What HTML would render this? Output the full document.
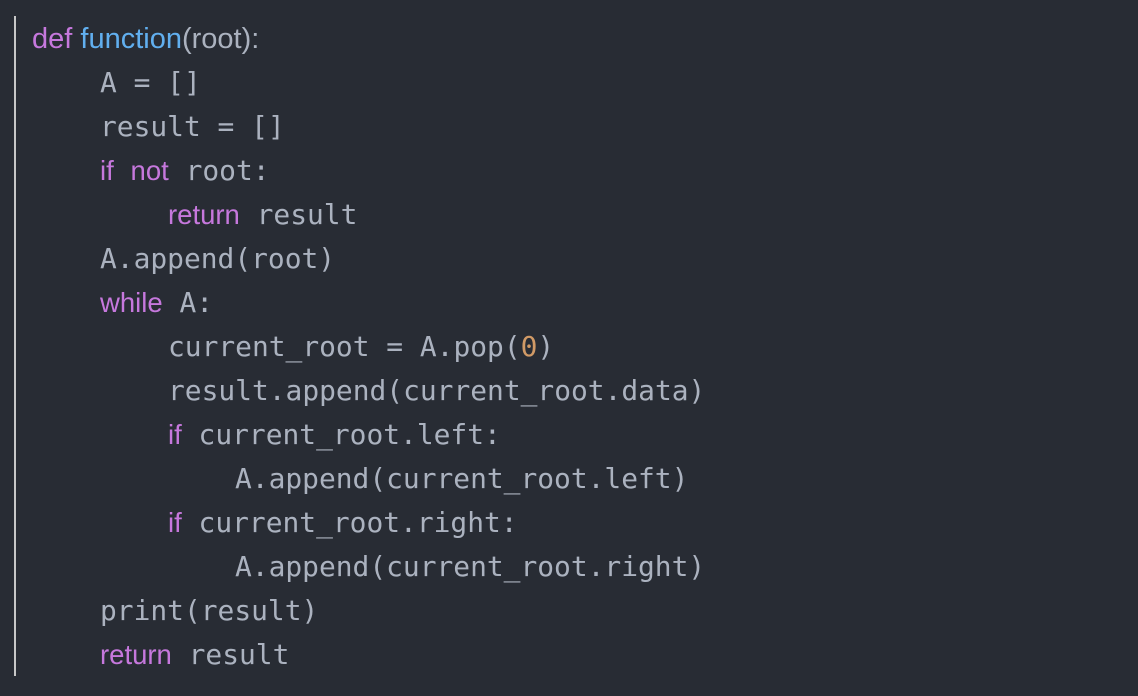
<!DOCTYPE html>
<html><head><meta charset="utf-8"><style>
html,body{margin:0;padding:0}
body{width:1138px;height:696px;background:#282c34;position:relative;overflow:hidden}
.bar{position:absolute;left:14px;top:16px;width:2px;height:660px;background:#c8c8c8}
.l{position:absolute;height:44px;line-height:44px;white-space:pre;color:#abb2bf;font-family:"DejaVu Sans Mono","Liberation Mono",monospace;font-size:27.9px;margin-top:1px}
.s{font-family:"Liberation Sans",sans-serif;font-size:29px}
.k{color:#c678dd;font-family:"Liberation Sans",sans-serif;font-size:27.5px}
.f{color:#61afef}
.n{color:#d19a66}
</style></head><body>
<div class="bar"></div>
<div class="l s" style="left:32px;top:16px"><span style="color:#c678dd">def</span> <span class="f">function</span>(root):</div>
<div class="l" style="left:100px;top:60px">A = []</div>
<div class="l" style="left:100px;top:104px">result = []</div>
<div class="l" style="left:100px;top:148px"><span class="k">if</span> <span class="k">not</span> root:</div>
<div class="l" style="left:168px;top:192px"><span class="k">return</span> result</div>
<div class="l" style="left:100px;top:236px">A.append(root)</div>
<div class="l" style="left:100px;top:280px"><span class="k">while</span> A:</div>
<div class="l" style="left:168px;top:324px">current_root = A.pop(<span class="n">0</span>)</div>
<div class="l" style="left:168px;top:368px">result.append(current_root.data)</div>
<div class="l" style="left:168px;top:412px"><span class="k">if</span> current_root.left:</div>
<div class="l" style="left:235px;top:456px">A.append(current_root.left)</div>
<div class="l" style="left:168px;top:500px"><span class="k">if</span> current_root.right:</div>
<div class="l" style="left:235px;top:544px">A.append(current_root.right)</div>
<div class="l" style="left:100px;top:588px">print(result)</div>
<div class="l" style="left:100px;top:632px"><span class="k">return</span> result</div>
</body></html>
